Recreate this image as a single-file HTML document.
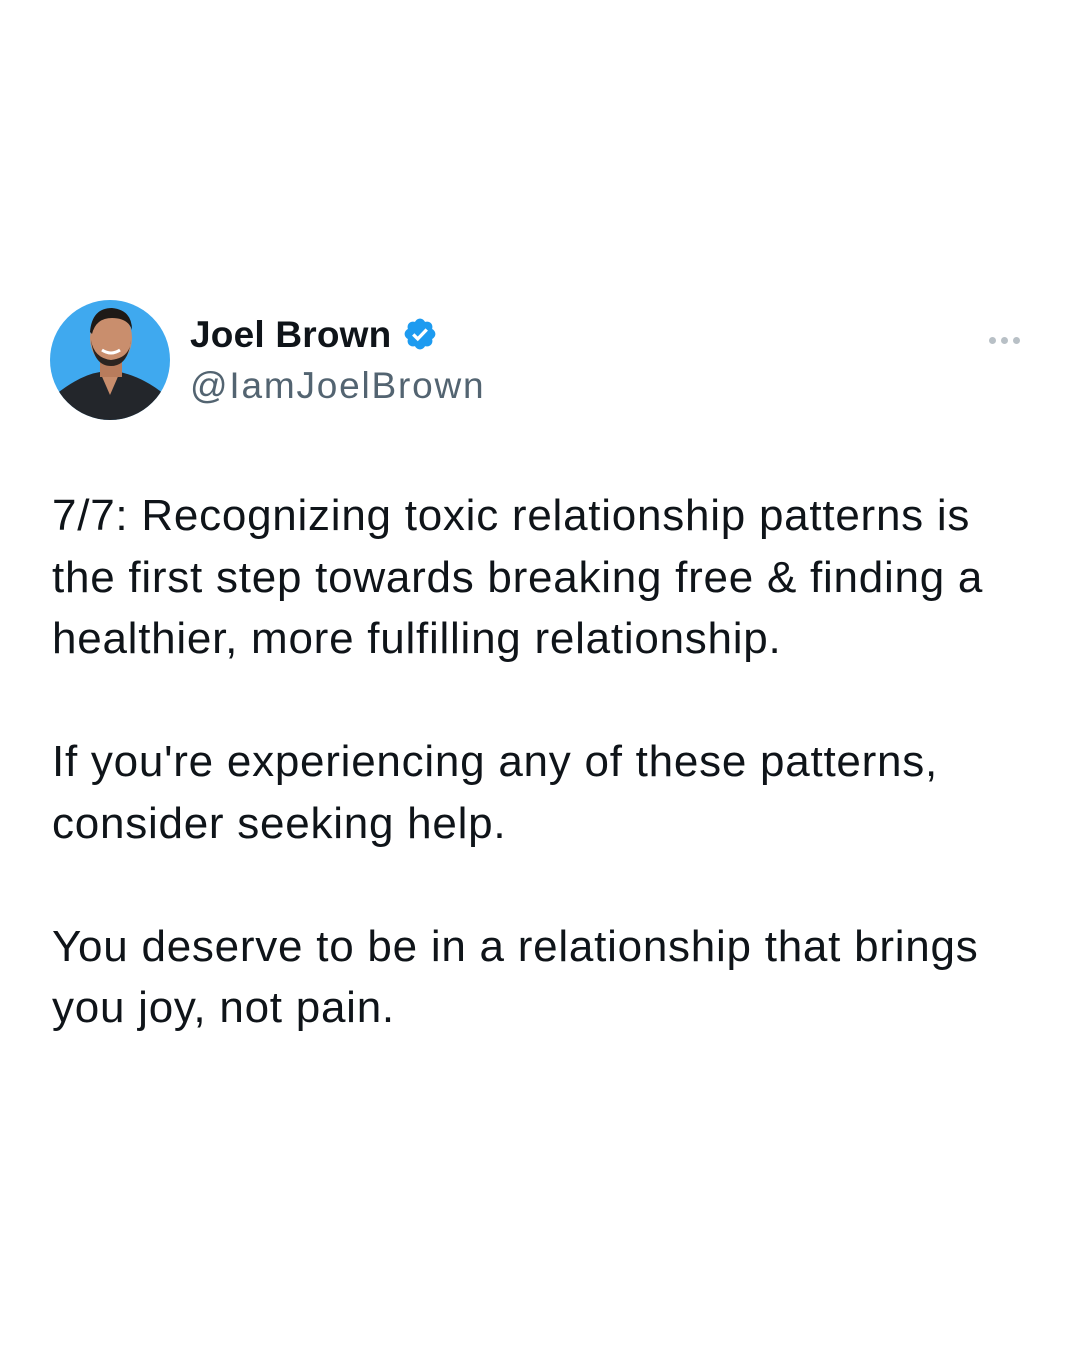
<!DOCTYPE html>
<html><head><meta charset="utf-8"><style>
body{margin:0;width:1080px;height:1350px;background:#fff;position:relative;font-family:"Liberation Sans",sans-serif;color:#0f1419;overflow:hidden}
.av{position:absolute;left:50px;top:300px;width:120px;height:120px;border-radius:50%;background:#3fa9ef;overflow:hidden}
.name{position:absolute;left:190px;top:314px;font-size:37px;font-weight:bold;letter-spacing:0.2px}
.handle{position:absolute;left:190px;top:365px;font-size:37px;color:#536471;letter-spacing:1.8px}
.dots{position:absolute;left:989px;top:331px}
.dots i{display:inline-block;width:7px;height:7px;border-radius:50%;background:#b8c0c6;margin-right:5px}
.body{position:absolute;left:52px;top:485px;font-size:44px;line-height:61.5px;width:1020px;letter-spacing:0.75px;white-space:nowrap}
p{margin:0 0 61.5px 0}
</style></head><body>
<div class="av">
<svg width="120" height="120" viewBox="0 0 120 120">
<path d="M0 120 L5 95 Q30 75 50 72 L70 72 Q95 78 115 95 L120 120Z" fill="#23262b"/>
<path d="M50 72 L60 95 L70 72Z" fill="#c88d6c"/>
<rect x="50" y="55" width="22" height="22" fill="#b97c5c"/>
<ellipse cx="61" cy="38" rx="21" ry="27" fill="#c98e6d"/>
<path d="M40 32 Q42 8 62 8 Q82 10 82 30 Q78 18 62 18 Q46 18 42 34Z" fill="#1e1a17"/>
<path d="M41 40 Q44 66 61 66 Q78 66 81 40 Q80 58 61 60 Q44 58 41 40Z" fill="#2c2420"/>
<path d="M52 50 Q61 56 70 50" stroke="#fff" stroke-width="3" fill="none"/>
</svg>
</div>
<div class="name">Joel Brown <svg width="36" height="36" viewBox="0 0 24 24" style="vertical-align:-5px"><path fill="#1d9bf0" d="M22.25 12c0-1.430-.88-2.670-2.190-3.340.46-1.390.2-2.900-.81-3.910s-2.520-1.270-3.910-.81c-.66-1.310-1.910-2.190-3.340-2.190s-2.670.88-3.330 2.190c-1.400-.46-2.910-.2-3.920.81s-1.260 2.520-.8 3.910c-1.310.67-2.200 1.910-2.200 3.340s.89 2.670 2.200 3.340c-.46 1.390-.21 2.900.8 3.910s2.520 1.260 3.910.81c.67 1.310 1.910 2.190 3.340 2.190s2.680-.88 3.340-2.190c1.390.45 2.900.2 3.910-.81s1.270-2.520.81-3.910c1.310-.67 2.190-1.910 2.190-3.340z"/><path d="M7.5 12.3l3 3 6-6.3" stroke="#fff" stroke-width="2.2" fill="none"/></svg></div>
<div class="handle">@IamJoelBrown</div>
<div class="dots"><i></i><i></i><i></i></div>
<div class="body">
<p>7/7: Recognizing toxic relationship patterns is<br>the first step towards breaking free &amp; finding a<br>healthier, more fulfilling relationship.</p>
<p>If you're experiencing any of these patterns,<br>consider seeking help.</p>
<p>You deserve to be in a relationship that brings<br>you joy, not pain.</p>
</div>
</body></html>
